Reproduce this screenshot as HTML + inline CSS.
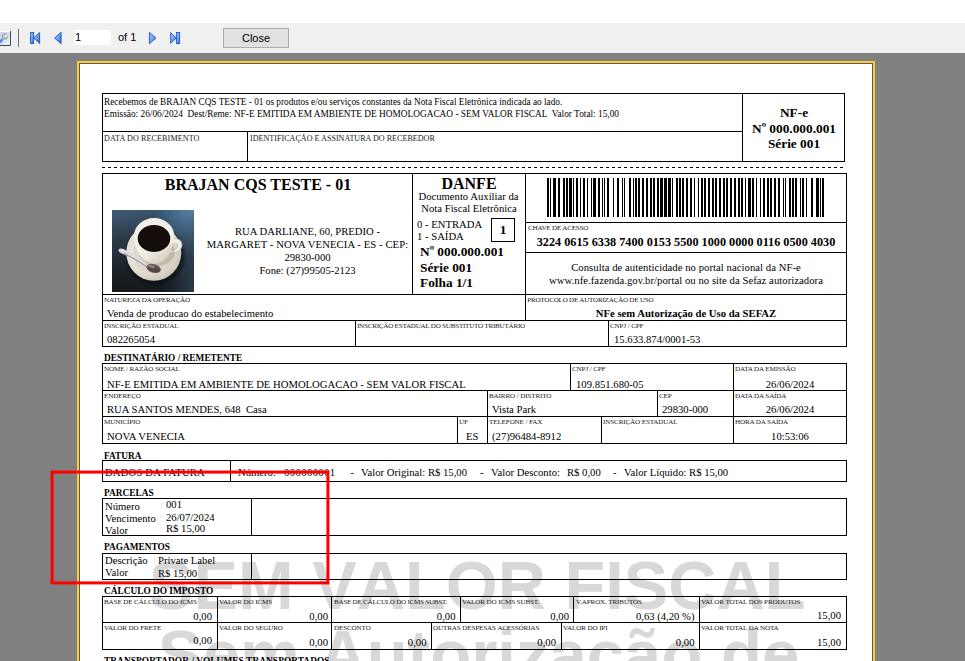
<!DOCTYPE html>
<html lang="pt-BR"><head><meta charset="utf-8"><title>DANFE</title>
<style>
html,body{margin:0;padding:0}
body{width:965px;height:661px;overflow:hidden;position:relative;background:#808080;font-family:"Liberation Serif",serif;color:#000}
.l{position:absolute}
.b{position:absolute;border:1px solid #000}
.t{position:absolute;white-space:pre;line-height:1;font-family:"Liberation Serif",serif}
.bd{font-weight:bold}
.lb{color:#222}
.sans{font-family:"Liberation Sans",sans-serif}
#top{position:absolute;left:0;top:0;width:965px;height:23px;background:#fff}
#bar{position:absolute;left:0;top:23px;width:965px;height:30px;background:#f0f0f0}
#page{position:absolute;left:77px;top:61px;width:794px;height:620px;background:#fff;border:2px solid #ffcc33}
#page:after{content:"";position:absolute;left:0;top:0;right:0;bottom:0;border:1px solid #555a66;border-bottom:none}
.wm{position:absolute;white-space:pre;line-height:1;font-family:"Liberation Sans",sans-serif;font-weight:bold;color:#d8d8d8;transform-origin:0 0;font-kerning:none}
</style></head><body>
<div id="top"></div><div id="bar"></div>

<svg class="l" style="left:0;top:23px" width="300" height="30" viewBox="0 23 300 30">
<defs>
<linearGradient id="g1" x1="0" y1="0" x2="1" y2="1"><stop offset="0" stop-color="#b4d0f6"/><stop offset="0.55" stop-color="#6d9fe8"/><stop offset="1" stop-color="#2a62d2"/></linearGradient>
<linearGradient id="g2" x1="0" y1="0" x2="1" y2="1"><stop offset="0" stop-color="#c3cfe8"/><stop offset="1" stop-color="#eef1f8"/></linearGradient>
</defs>
<rect x="-5" y="31.5" width="15.5" height="14" fill="url(#g2)" stroke="#fff" stroke-width="1"/>
<path d="M-5 45.5 H10.5 V31" fill="none" stroke="#3b4d66" stroke-width="1"/>
<circle cx="4.9" cy="36.4" r="2.8" fill="#c6c6c6" stroke="#8f8f8f" stroke-width="0.8"/>
<path d="M5.0 36.3 L8.0 32.6 L9.9 34.6 L6.2 37.6Z" fill="#d3dbee"/>
<circle cx="5.6" cy="35.8" r="0.9" fill="#eef1f7"/>
<path d="M3.4 38.2 L1.6 40.2" stroke="#a9a9a9" stroke-width="2.2"/>
<path d="M2.4 39.4 L-1.5 43.4" stroke="#4a8ae6" stroke-width="2.6"/>
<rect x="18" y="29" width="1" height="18" fill="#6e6e6e"/>
<g stroke="#1a55cc" stroke-width="0.9" fill="url(#g1)" stroke-linejoin="miter">
<rect x="30.6" y="32.5" width="3" height="11"/>
<path d="M39.6 32.6 V43.4 L33.8 38Z"/>
<path d="M61.1 32.3 V43.7 L54.6 38Z"/>
<path d="M149.4 32.3 V43.7 L155.9 38Z"/>
<path d="M170.6 32.6 V43.4 L176.2 38Z"/>
<rect x="176.4" y="32.5" width="3.2" height="11"/>
</g>
<rect x="74" y="30" width="37" height="15" fill="#fff"/>
<rect x="223.5" y="28.5" width="65" height="19" fill="#e1e1e1" stroke="#adadad" stroke-width="1"/>
<g font-family="'Liberation Sans', sans-serif" font-size="11" fill="#000">
<text x="75" y="41">1</text>
<text x="118" y="41">of 1</text>
<text x="256" y="42.3" text-anchor="middle">Close</text>
</g>
</svg>
<div id="page"></div>
<div class="wm" id="wm1" style="left:149px;top:551px;font-size:69.4px;transform:scaleX(0.962)">SEM VALOR FISCAL</div>
<div class="wm" id="wm2" style="left:158.2px;top:620.3px;font-size:69.4px;transform:scaleX(0.967)">Sem Autorização de</div>
<div class="b" style="left:102px;top:93px;width:741px;height:67px"></div>
<div class="l" style="left:102px;top:131px;width:641px;height:1px;background:#000"></div>
<div class="l" style="left:247px;top:131px;width:1px;height:31px;background:#000"></div>
<div class="l" style="left:742px;top:93px;width:1px;height:69px;background:#000"></div>
<div class="l" style="left:102px;top:167px;width:742px;height:1px;background:repeating-linear-gradient(90deg,#000 0,#000 3px,transparent 3px,transparent 6px)"></div>
<div class="b" style="left:102px;top:173px;width:743px;height:172px"></div>
<div class="l" style="left:412px;top:173px;width:1px;height:122px;background:#000"></div>
<div class="l" style="left:525px;top:173px;width:1px;height:148px;background:#000"></div>
<div class="l" style="left:525px;top:222px;width:322px;height:1px;background:#000"></div>
<div class="l" style="left:525px;top:252px;width:322px;height:1px;background:#000"></div>
<div class="l" style="left:102px;top:294px;width:745px;height:1px;background:#000"></div>
<div class="l" style="left:102px;top:320px;width:745px;height:1px;background:#000"></div>
<div class="l" style="left:355px;top:320px;width:1px;height:27px;background:#000"></div>
<div class="l" style="left:608px;top:320px;width:1px;height:27px;background:#000"></div>
<svg class="l" style="left:112px;top:210px" width="82" height="82" viewBox="0 0 82 82">
<defs>
<linearGradient id="cbg" x1="0.3" y1="0" x2="0.45" y2="1"><stop offset="0" stop-color="#3d5872"/><stop offset="0.3" stop-color="#2c3b49"/><stop offset="0.7" stop-color="#1b2026"/><stop offset="1" stop-color="#15181c"/></linearGradient>
<radialGradient id="chl" cx="1" cy="0" r="0.62"><stop offset="0" stop-color="#74b2dc" stop-opacity="1"/><stop offset="0.45" stop-color="#4b7ea6" stop-opacity="0.6"/><stop offset="1" stop-color="#2b3b4a" stop-opacity="0"/></radialGradient>
<linearGradient id="chr" x1="0" y1="0" x2="1" y2="0"><stop offset="0.6" stop-color="#3a536b" stop-opacity="0"/><stop offset="1" stop-color="#3a536b" stop-opacity="0.55"/></linearGradient>
<radialGradient id="csa" cx="0.4" cy="0.4" r="0.7"><stop offset="0" stop-color="#efeae1"/><stop offset="0.65" stop-color="#e4ded2"/><stop offset="1" stop-color="#c4bcae"/></radialGradient>
<linearGradient id="ccup" x1="0" y1="0" x2="1" y2="0.8"><stop offset="0" stop-color="#faf8f3"/><stop offset="0.55" stop-color="#eee9df"/><stop offset="1" stop-color="#cfc7b9"/></linearGradient>
<radialGradient id="ccof" cx="0.5" cy="0.45" r="0.6"><stop offset="0" stop-color="#1a0f0a"/><stop offset="0.85" stop-color="#110906"/><stop offset="1" stop-color="#2c1a10"/></radialGradient>
<filter id="cb1" x="-10%" y="-10%" width="120%" height="120%"><feGaussianBlur stdDeviation="0.5"/></filter>
<filter id="cb2" x="-20%" y="-20%" width="140%" height="140%"><feGaussianBlur stdDeviation="1.8"/></filter>
<clipPath id="cclip"><rect width="82" height="82"/></clipPath>
</defs>
<g clip-path="url(#cclip)">
<rect width="82" height="82" fill="url(#cbg)"/>
<rect width="82" height="82" fill="url(#chl)"/>
<rect width="82" height="82" fill="url(#chr)"/>
<ellipse cx="43.5" cy="46" rx="29" ry="28.5" fill="#04070a" opacity="0.55" filter="url(#cb2)"/>
<g filter="url(#cb1)">
<ellipse cx="41.8" cy="42.6" rx="27.5" ry="28.2" fill="url(#csa)"/>
<ellipse cx="41.5" cy="43.5" rx="20.5" ry="20" fill="#d5cdc0" opacity="0.45"/>
<path fill-rule="evenodd" d="M58 29.5 C65 27 70.5 30 70 35.5 C69.5 41.5 62 44.5 55.5 43.5 L56.5 29.8Z M60.5 34.2 C63.5 32.8 66.3 33.5 66 36 C65.7 38.6 62.5 40 59.5 39.8Z" fill="#f3efe7" stroke="#b8af9f" stroke-width="0.7"/>
<ellipse cx="45" cy="42" rx="18" ry="14" fill="#8c8374" opacity="0.35"/><path d="M22.3 26 C22.5 40 30 53.6 42.5 53.8 C53 53.8 61 43 62 26Z" fill="url(#ccup)"/>
<ellipse cx="42.1" cy="25.4" rx="20" ry="17.3" fill="#f3efe8"/>
<ellipse cx="42" cy="28.5" rx="16.3" ry="13.4" fill="url(#ccof)"/>
<path d="M6.6 39.6 C8.6 37.6 11.6 38.8 14.2 40.4 C22 44.6 30 49.6 36.6 55 L35.2 57.6 C28 52.8 20 48.2 12 44.4 C9.4 43.4 5.6 42 6.6 39.6Z" fill="#dcdcdf"/>
<path d="M12 43.5 C20 47.5 28 52 35.4 57" stroke="#77747a" stroke-width="0.8" fill="none"/>
<ellipse cx="41.6" cy="58.4" rx="7.5" ry="4.4" transform="rotate(16 41.6 58.4)" fill="#72625d"/>
<ellipse cx="42" cy="59" rx="6" ry="3.1" transform="rotate(16 42 59)" fill="#54443f"/>
<ellipse cx="39.8" cy="56.6" rx="3.2" ry="1" transform="rotate(16 39.8 56.6)" fill="#a59b97"/>
</g>
</g>
</svg>
<div class="b" style="left:491px;top:218px;width:22px;height:22px"></div>
<svg class="l" style="left:547px;top:178px" width="277" height="39" viewBox="0 0 277 39" shape-rendering="crispEdges"><rect x="0" y="0" width="2" height="39"/><rect x="3" y="0" width="1" height="39"/><rect x="6" y="0" width="3" height="39"/><rect x="11" y="0" width="2" height="39"/><rect x="16" y="0" width="2" height="39"/><rect x="19" y="0" width="2" height="39"/><rect x="22" y="0" width="3" height="39"/><rect x="26" y="0" width="1" height="39"/><rect x="29" y="0" width="2" height="39"/><rect x="33" y="0" width="1" height="39"/><rect x="36" y="0" width="2" height="39"/><rect x="40" y="0" width="1" height="39"/><rect x="44" y="0" width="1" height="39"/><rect x="46" y="0" width="3" height="39"/><rect x="51" y="0" width="2" height="39"/><rect x="55" y="0" width="1" height="39"/><rect x="57" y="0" width="1" height="39"/><rect x="60" y="0" width="2" height="39"/><rect x="66" y="0" width="1" height="39"/><rect x="70" y="0" width="2" height="39"/><rect x="75" y="0" width="1" height="39"/><rect x="77" y="0" width="1" height="39"/><rect x="82" y="0" width="2" height="39"/><rect x="86" y="0" width="1" height="39"/><rect x="88" y="0" width="2" height="39"/><rect x="91" y="0" width="2" height="39"/><rect x="95" y="0" width="2" height="39"/><rect x="99" y="0" width="2" height="39"/><rect x="103" y="0" width="2" height="39"/><rect x="106" y="0" width="2" height="39"/><rect x="110" y="0" width="2" height="39"/><rect x="113" y="0" width="3" height="39"/><rect x="117" y="0" width="3" height="39"/><rect x="121" y="0" width="3" height="39"/><rect x="125" y="0" width="1" height="39"/><rect x="129" y="0" width="2" height="39"/><rect x="132" y="0" width="2" height="39"/><rect x="135" y="0" width="2" height="39"/><rect x="139" y="0" width="2" height="39"/><rect x="143" y="0" width="2" height="39"/><rect x="147" y="0" width="1" height="39"/><rect x="151" y="0" width="1" height="39"/><rect x="154" y="0" width="2" height="39"/><rect x="157" y="0" width="2" height="39"/><rect x="161" y="0" width="2" height="39"/><rect x="165" y="0" width="2" height="39"/><rect x="168" y="0" width="2" height="39"/><rect x="172" y="0" width="2" height="39"/><rect x="176" y="0" width="2" height="39"/><rect x="179" y="0" width="2" height="39"/><rect x="183" y="0" width="2" height="39"/><rect x="187" y="0" width="2" height="39"/><rect x="191" y="0" width="2" height="39"/><rect x="194" y="0" width="2" height="39"/><rect x="198" y="0" width="1" height="39"/><rect x="201" y="0" width="3" height="39"/><rect x="205" y="0" width="2" height="39"/><rect x="209" y="0" width="1" height="39"/><rect x="213" y="0" width="1" height="39"/><rect x="216" y="0" width="2" height="39"/><rect x="220" y="0" width="2" height="39"/><rect x="223" y="0" width="2" height="39"/><rect x="227" y="0" width="2" height="39"/><rect x="231" y="0" width="2" height="39"/><rect x="236" y="0" width="1" height="39"/><rect x="238" y="0" width="1" height="39"/><rect x="242" y="0" width="2" height="39"/><rect x="245" y="0" width="2" height="39"/><rect x="248" y="0" width="2" height="39"/><rect x="253" y="0" width="1" height="39"/><rect x="255" y="0" width="2" height="39"/><rect x="259" y="0" width="1" height="39"/><rect x="264" y="0" width="2" height="39"/><rect x="269" y="0" width="3" height="39"/><rect x="273" y="0" width="1" height="39"/><rect x="275" y="0" width="2" height="39"/></svg>
<div class="b" style="left:102px;top:363px;width:743px;height:79px"></div>
<div class="l" style="left:102px;top:390px;width:745px;height:1px;background:#000"></div>
<div class="l" style="left:102px;top:416px;width:745px;height:1px;background:#000"></div>
<div class="l" style="left:570px;top:363px;width:1px;height:28px;background:#000"></div>
<div class="l" style="left:733px;top:363px;width:1px;height:81px;background:#000"></div>
<div class="l" style="left:487px;top:390px;width:1px;height:54px;background:#000"></div>
<div class="l" style="left:657px;top:390px;width:1px;height:27px;background:#000"></div>
<div class="l" style="left:457px;top:416px;width:1px;height:28px;background:#000"></div>
<div class="l" style="left:601px;top:416px;width:1px;height:28px;background:#000"></div>
<div class="b" style="left:102px;top:460px;width:743px;height:20px"></div>
<div class="l" style="left:230px;top:460px;width:1px;height:22px;background:#000"></div>
<div class="b" style="left:102px;top:498px;width:743px;height:36px"></div>
<div class="l" style="left:251px;top:498px;width:1px;height:38px;background:#000"></div>
<div class="b" style="left:102px;top:553px;width:743px;height:25px"></div>
<div class="l" style="left:251px;top:553px;width:1px;height:27px;background:#000"></div>
<div class="b" style="left:102px;top:596px;width:743px;height:52px"></div>
<div class="l" style="left:102px;top:622px;width:745px;height:1px;background:#000"></div>
<div class="l" style="left:217px;top:596px;width:1px;height:27px;background:#000"></div>
<div class="l" style="left:331px;top:596px;width:1px;height:27px;background:#000"></div>
<div class="l" style="left:460px;top:596px;width:1px;height:27px;background:#000"></div>
<div class="l" style="left:573px;top:596px;width:1px;height:27px;background:#000"></div>
<div class="l" style="left:699px;top:596px;width:1px;height:27px;background:#000"></div>
<div class="l" style="left:217px;top:622px;width:1px;height:28px;background:#000"></div>
<div class="l" style="left:331px;top:622px;width:1px;height:28px;background:#000"></div>
<div class="l" style="left:431px;top:622px;width:1px;height:28px;background:#000"></div>
<div class="l" style="left:561px;top:622px;width:1px;height:28px;background:#000"></div>
<div class="l" style="left:699px;top:622px;width:1px;height:28px;background:#000"></div>
<svg class="l" style="left:0;top:0" width="965" height="661" viewBox="0 0 965 661"><g font-family="'Liberation Serif', serif" fill="#000" style="white-space:pre" xml:space="preserve"><text x="104" y="105" font-size="9.33" textLength="458.3" lengthAdjust="spacingAndGlyphs">Recebemos de BRAJAN CQS TESTE - 01 os produtos e/ou serviços constantes da Nota Fiscal Eletrônica indicada ao lado.</text><text x="104" y="117" font-size="9.33" textLength="515" lengthAdjust="spacingAndGlyphs">Emissão: 26/06/2024  Dest/Reme: NF-E EMITIDA EM AMBIENTE DE HOMOLOGACAO - SEM VALOR FISCAL  Valor Total: 15,00</text><text x="104" y="141" font-size="8.1" fill="#222" letter-spacing="0.1">DATA DO RECEBIMENTO</text><text x="250" y="141" font-size="8.1" fill="#222">IDENTIFICAÇÃO E ASSINATURA DO RECEBEDOR</text><text x="794" y="117" font-size="13.33" font-weight="bold" text-anchor="middle">NF-e</text><text x="794" y="133" font-size="13.33" font-weight="bold" text-anchor="middle">Nº 000.000.001</text><text x="794" y="148" font-size="13.33" font-weight="bold" text-anchor="middle">Série 001</text><text x="258" y="190" font-size="16" font-weight="bold" text-anchor="middle">BRAJAN CQS TESTE - 01</text><text x="307.5" y="235" font-size="10.67" text-anchor="middle">RUA DARLIANE, 60, PREDIO -</text><text x="307.5" y="248" font-size="10.67" letter-spacing="0.08" text-anchor="middle">MARGARET - NOVA VENECIA - ES - CEP:</text><text x="307.5" y="261" font-size="10.67" text-anchor="middle">29830-000</text><text x="307.5" y="274" font-size="10.67" text-anchor="middle">Fone: (27)99505-2123</text><text x="469" y="189" font-size="16" font-weight="bold" text-anchor="middle">DANFE</text><text x="468.5" y="200" font-size="10.67" text-anchor="middle">Documento Auxiliar da</text><text x="469" y="212" font-size="10.67" text-anchor="middle">Nota Fiscal Eletrônica</text><text x="417" y="228" font-size="10.67">0 - ENTRADA</text><text x="417" y="240" font-size="10.67">1 - SAÍDA</text><text x="503" y="234" font-size="13.33" font-weight="bold" text-anchor="middle">1</text><text x="420" y="256" font-size="13.33" font-weight="bold">Nº 000.000.001</text><text x="420" y="272" font-size="13.33" font-weight="bold">Série 001</text><text x="420" y="287" font-size="13.33" font-weight="bold">Folha 1/1</text><text x="528" y="230" font-size="7.1" fill="#222" letter-spacing="-0.21000000000000002">CHAVE DE ACESSO</text><text x="686" y="246" font-size="13.33" font-weight="bold" textLength="298.5" lengthAdjust="spacingAndGlyphs" text-anchor="middle">3224 0615 6338 7400 0153 5500 1000 0000 0116 0500 4030</text><text x="686" y="271" font-size="10.67" letter-spacing="0.05" text-anchor="middle">Consulta de autenticidade no portal nacional da NF-e</text><text x="686" y="284" font-size="10.67" letter-spacing="0.05" text-anchor="middle">www.nfe.fazenda.gov.br/portal ou no site da Sefaz autorizadora</text><text x="104" y="302" font-size="7.1" fill="#222" letter-spacing="-0.13">NATUREZA DA OPERAÇÃO</text><text x="107" y="317" font-size="10.67">Venda de producao do estabelecimento</text><text x="527.2" y="302" font-size="7.1" fill="#222" letter-spacing="-0.23">PROTOCOLO DE AUTORIZAÇÃO DE USO</text><text x="686" y="317" font-size="10.67" font-weight="bold" text-anchor="middle">NFe sem Autorização de Uso da SEFAZ</text><text x="104" y="328" font-size="7.1" fill="#222" letter-spacing="-0.13">INSCRIÇÃO ESTADUAL</text><text x="107" y="343" font-size="10.67">082265054</text><text x="357" y="328" font-size="7.1" fill="#222" letter-spacing="-0.24">INSCRIÇÃO ESTADUAL DO SUBSTITUTO TRIBUTÁRIO</text><text x="610" y="328" font-size="7.1" fill="#222" letter-spacing="-0.13">CNPJ / CPF</text><text x="614" y="343" font-size="10.67">15.633.874/0001-53</text><text x="104" y="361" font-size="9.33" font-weight="bold">DESTINATÁRIO / REMETENTE</text><text x="104" y="371" font-size="7.1" fill="#222" letter-spacing="-0.13">NOME / RAZÃO SOCIAL</text><text x="107" y="388" font-size="10.67">NF-E EMITIDA EM AMBIENTE DE HOMOLOGACAO - SEM VALOR FISCAL</text><text x="572" y="371" font-size="7.1" fill="#222" letter-spacing="-0.13">CNPJ / CPF</text><text x="576" y="388" font-size="10.67">109.851.680-05</text><text x="735" y="371" font-size="7.1" fill="#222" letter-spacing="-0.13">DATA DA EMISSÃO</text><text x="790" y="388" font-size="10.67" text-anchor="middle">26/06/2024</text><text x="104" y="398" font-size="7.1" fill="#222" letter-spacing="-0.13">ENDEREÇO</text><text x="107" y="413" font-size="10.67">RUA SANTOS MENDES, 648  Casa</text><text x="489" y="398" font-size="7.1" fill="#222" letter-spacing="-0.13">BAIRRO / DISTRITO</text><text x="492" y="413" font-size="10.67">Vista Park</text><text x="659" y="398" font-size="7.1" fill="#222" letter-spacing="-0.13">CEP</text><text x="662" y="413" font-size="10.67">29830-000</text><text x="735" y="398" font-size="7.1" fill="#222" letter-spacing="-0.13">DATA DA SAÍDA</text><text x="790" y="413" font-size="10.67" text-anchor="middle">26/06/2024</text><text x="104" y="424" font-size="7.1" fill="#222" letter-spacing="-0.13">MUNICÍPIO</text><text x="107" y="440" font-size="10.67">NOVA VENECIA</text><text x="459" y="424" font-size="7.1" fill="#222" letter-spacing="-0.13">UF</text><text x="466" y="440" font-size="10.67">ES</text><text x="489" y="424" font-size="7.1" fill="#222" letter-spacing="-0.13">TELEFONE / FAX</text><text x="492" y="440" font-size="10.67">(27)96484-8912</text><text x="603" y="424" font-size="7.1" fill="#222" letter-spacing="-0.13">INSCRIÇÃO ESTADUAL</text><text x="735" y="424" font-size="7.1" fill="#222" letter-spacing="-0.13">HORA DA SAÍDA</text><text x="790" y="440" font-size="10.67" text-anchor="middle">10:53:06</text><text x="104" y="459" font-size="9.33" font-weight="bold">FATURA</text><text x="105" y="476" font-size="10.67" letter-spacing="0.16">DADOS DA FATURA</text><text x="238" y="476" font-size="10.67">Número:</text><text x="284" y="476" font-size="10.67" letter-spacing="0.4">000000001</text><text x="350.5" y="476" font-size="10.67">-</text><text x="361" y="476" font-size="10.67">Valor Original: R$ 15,00</text><text x="480" y="476" font-size="10.67">-</text><text x="491" y="476" font-size="10.67">Valor Desconto:</text><text x="567" y="476" font-size="10.67">R$ 0,00</text><text x="613" y="476" font-size="10.67">-</text><text x="624" y="476" font-size="10.67">Valor Líquido: R$ 15,00</text><text x="104" y="496" font-size="9.33" font-weight="bold">PARCELAS</text><text x="105" y="510" font-size="10.67">Número</text><text x="160" y="508" font-size="10.67" fill="#f0d8c0">:</text><text x="166" y="508" font-size="10.67">001</text><text x="105" y="522" font-size="10.67">Vencimento</text><text x="160" y="521" font-size="10.67" fill="#f0d8c0">:</text><text x="166" y="521" font-size="10.67">26/07/2024</text><text x="105" y="534" font-size="10.67">Valor</text><text x="160" y="532" font-size="10.67" fill="#f0d8c0">:</text><text x="166" y="532" font-size="10.67">R$ 15,00</text><text x="104" y="550" font-size="9.33" font-weight="bold">PAGAMENTOS</text><text x="105" y="564" font-size="10.67">Descrição</text><text x="153" y="564" font-size="10.67" fill="#f0d8c0">:</text><text x="158" y="564" font-size="10.67">Private Label</text><text x="105" y="576" font-size="10.67">Valor</text><text x="153" y="577" font-size="10.67" fill="#f0d8c0">:</text><text x="158" y="577" font-size="10.67">R$ 15,00</text><text x="104" y="594" font-size="9.33" font-weight="bold">CÁLCULO DO IMPOSTO</text><text x="104" y="604" font-size="7.1" fill="#222" letter-spacing="-0.13">BASE DE CÁLCULO DO ICMS</text><text x="212" y="620" font-size="10.67" text-anchor="end">0,00</text><text x="219" y="604" font-size="7.1" fill="#222" letter-spacing="-0.13">VALOR DO ICMS</text><text x="328" y="620" font-size="10.67" text-anchor="end">0,00</text><text x="334" y="604" font-size="7.1" fill="#222" letter-spacing="-0.26">BASE DE CÁLCULO DO ICMS SUBST.</text><text x="455.5" y="620" font-size="10.67" text-anchor="end">0,00</text><text x="462" y="604" font-size="7.1" fill="#222" letter-spacing="-0.13">VALOR DO ICMS SUBST.</text><text x="569" y="620" font-size="10.67" text-anchor="end">0,00</text><text x="576" y="604" font-size="7.1" fill="#222" letter-spacing="-0.13">V.APROX. TRIBUTOS</text><text x="694.5" y="620" font-size="10.67" text-anchor="end">0,63 (4,20 %)</text><text x="701" y="604" font-size="7.1" fill="#222" letter-spacing="-0.13">VALOR TOTAL DOS PRODUTOS</text><text x="841" y="619" font-size="10.67" text-anchor="end">15,00</text><text x="104" y="630" font-size="7.1" fill="#222" letter-spacing="-0.13">VALOR DO FRETE</text><text x="212" y="644" font-size="10.67" text-anchor="end">0,00</text><text x="219" y="630" font-size="7.1" fill="#222" letter-spacing="-0.13">VALOR DO SEGURO</text><text x="328" y="646" font-size="10.67" text-anchor="end">0,00</text><text x="334" y="630" font-size="7.1" fill="#222" letter-spacing="-0.13">DESCONTO</text><text x="426.5" y="646" font-size="10.67" text-anchor="end">0,00</text><text x="433" y="630" font-size="7.1" fill="#222" letter-spacing="-0.13">OUTRAS DESPESAS ACESSÓRIAS</text><text x="556" y="646" font-size="10.67" text-anchor="end">0,00</text><text x="563" y="630" font-size="7.1" fill="#222" letter-spacing="-0.13">VALOR DO IPI</text><text x="694.5" y="646" font-size="10.67" text-anchor="end">0,00</text><text x="701" y="630" font-size="7.1" fill="#222" letter-spacing="-0.13">VALOR TOTAL DA NOTA</text><text x="841" y="646" font-size="10.67" text-anchor="end">15,00</text><text x="104" y="664" font-size="9.33" font-weight="bold" letter-spacing="0.08">TRANSPORTADOR / VOLUMES TRANSPORTADOS</text></g></svg>
<svg class="l" style="left:0;top:0" width="965" height="661" viewBox="0 0 965 661"><rect x="52.1" y="472.1" width="275.8" height="110.8" fill="none" stroke="#ff0000" stroke-width="3"/></svg>
</body></html>
